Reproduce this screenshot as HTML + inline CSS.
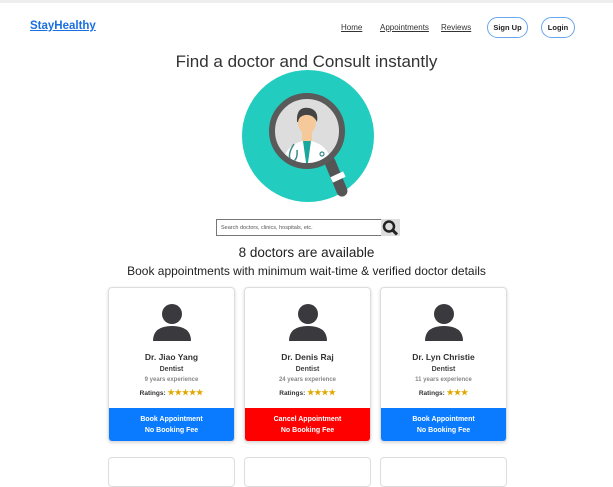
<!DOCTYPE html><html><head><style>
*{margin:0;padding:0;box-sizing:border-box}
body{width:613px;height:475px;overflow:hidden;background:#fff;font-family:"Liberation Sans",Arial,sans-serif;position:relative;color:#333}
.a{position:absolute}
.nav{font-size:8px;color:#333;text-decoration:underline}
.pill{border:1.5px solid #6aa6f0;border-radius:12px;font-size:7.5px;font-weight:bold;display:flex;align-items:center;justify-content:center;color:#222}
.card{position:absolute;top:287px;width:127px;height:155px;border:1px solid #ddd;border-radius:4px;box-shadow:0 1px 3px rgba(0,0,0,.15);text-align:center;overflow:hidden;background:#fff}
.card .n{position:absolute;top:64px;width:100%;font-size:8.5px;font-weight:bold;color:#333}
.card .d{position:absolute;top:78px;width:100%;font-size:7px;font-weight:bold;color:#444}
.card .e{position:absolute;top:89px;width:100%;font-size:6px;font-weight:bold;color:#888}
.card .r{position:absolute;top:100px;width:100%;font-size:6.5px;font-weight:bold;color:#333}
.card .r span{color:#e0a800;font-size:8px}
.card .b{position:absolute;top:120px;left:0;width:100%;height:35px;color:#fff;font-size:7px;font-weight:bold;line-height:11px;padding-top:6px}
.c2{position:absolute;top:457px;width:127px;height:30px;border:1px solid #ddd;border-radius:4px}
</style></head><body>
<div class="a" style="top:0;left:0;width:613px;height:3px;background:#eee"></div>
<div class="a" style="left:30px;top:20px;font-size:11.5px;font-weight:bold;color:#1a6fe0;text-decoration:underline">StayHealthy</div>
<div class="a nav" style="left:341px;top:23px">Home</div>
<div class="a nav" style="left:380px;top:23px">Appointments</div>
<div class="a nav" style="left:441px;top:23px">Reviews</div>
<div class="a pill" style="left:487px;top:17px;width:41px;height:21px">Sign Up</div>
<div class="a pill" style="left:541px;top:17px;width:34px;height:21px">Login</div>
<div class="a" style="left:0;width:613px;top:52px;text-align:center;font-size:17px;color:#333">Find a doctor and Consult instantly</div>
<svg class="a" style="left:242px;top:70px" width="132" height="132" viewBox="0 0 132 132">
<circle cx="66" cy="66" r="66" fill="#22cdc0"/>
<line x1="88" y1="92" x2="100" y2="121" stroke="#555" stroke-width="11" stroke-linecap="round"/>
<rect x="89" y="104" width="14" height="6" fill="#fff" transform="rotate(-25 96 107)"/>
<circle cx="65" cy="61" r="35" fill="#ddd" stroke="#5a5a5a" stroke-width="6"/>
<clipPath id="cl"><circle cx="65" cy="61" r="32"/></clipPath>
<g clip-path="url(#cl)">
<path d="M40 100 Q40 74 65 70 Q90 74 90 100Z" fill="#fff"/>
<path d="M61 71 L65 100 L69 71Z" fill="#1aa89c"/>
<rect x="60" y="60" width="10" height="11" fill="#f6c99a"/>
<ellipse cx="65" cy="52" rx="9" ry="12" fill="#f6c99a"/>
<path d="M55 52 Q54 36 67 38 Q77 40 75 52 Q71 44 63 45 Q57 46 56 52Z" fill="#444"/>
<path d="M52 74 Q44 86 50 92 Q56 90 55 80" stroke="#3a8a8a" stroke-width="1.5" fill="none"/>
<circle cx="80" cy="84" r="2" stroke="#3a8a8a" stroke-width="1.2" fill="none"/>
</g></svg>
<div class="a" style="left:216px;top:219px;width:166px;height:17px;border:1px solid #777;font-size:5.5px;color:#555;padding:5px 4px">Search doctors, clinics, hospitals, etc.</div>
<svg class="a" style="left:381px;top:219px" width="19" height="17" viewBox="0 0 19 17"><rect width="19" height="17" fill="#ddd"/><circle cx="8" cy="7.5" r="5" stroke="#222" stroke-width="2.5" fill="none"/><line x1="11.5" y1="11" x2="16" y2="15.5" stroke="#222" stroke-width="3"/></svg>
<div class="a" style="left:0;width:613px;top:245px;text-align:center;font-size:13.5px;color:#222">8 doctors are available</div>
<div class="a" style="left:0;width:613px;top:264px;text-align:center;font-size:12px;color:#222">Book appointments with minimum wait-time &amp; verified doctor details</div>
<svg width="0" height="0"><defs><g id="p"><circle cx="20" cy="12" r="10" fill="#3a3a3e"/><path d="M1 39 Q1 24 20 24 Q39 24 39 39Z" fill="#3a3a3e"/></g></defs></svg>

<div class="card" style="left:108px"><svg class="a" style="left:43px;top:14px" width="40" height="40"><use href="#p"/></svg>
<div class="n">Dr. Jiao Yang</div><div class="d">Dentist</div><div class="e">9 years experience</div><div class="r">Ratings: <span>★★★★★</span></div>
<div class="b" style="background:#0a7bff">Book Appointment<br>No Booking Fee</div></div>
<div class="card" style="left:244px"><svg class="a" style="left:43px;top:14px" width="40" height="40"><use href="#p"/></svg>
<div class="n">Dr. Denis Raj</div><div class="d">Dentist</div><div class="e">24 years experience</div><div class="r">Ratings: <span>★★★★</span></div>
<div class="b" style="background:#ff0000">Cancel Appointment<br>No Booking Fee</div></div>
<div class="card" style="left:380px"><svg class="a" style="left:43px;top:14px" width="40" height="40"><use href="#p"/></svg>
<div class="n">Dr. Lyn Christie</div><div class="d">Dentist</div><div class="e">11 years experience</div><div class="r">Ratings: <span>★★★</span></div>
<div class="b" style="background:#0a7bff">Book Appointment<br>No Booking Fee</div></div>
<div class="c2" style="left:108px"></div><div class="c2" style="left:244px"></div><div class="c2" style="left:380px"></div>
</body></html>
